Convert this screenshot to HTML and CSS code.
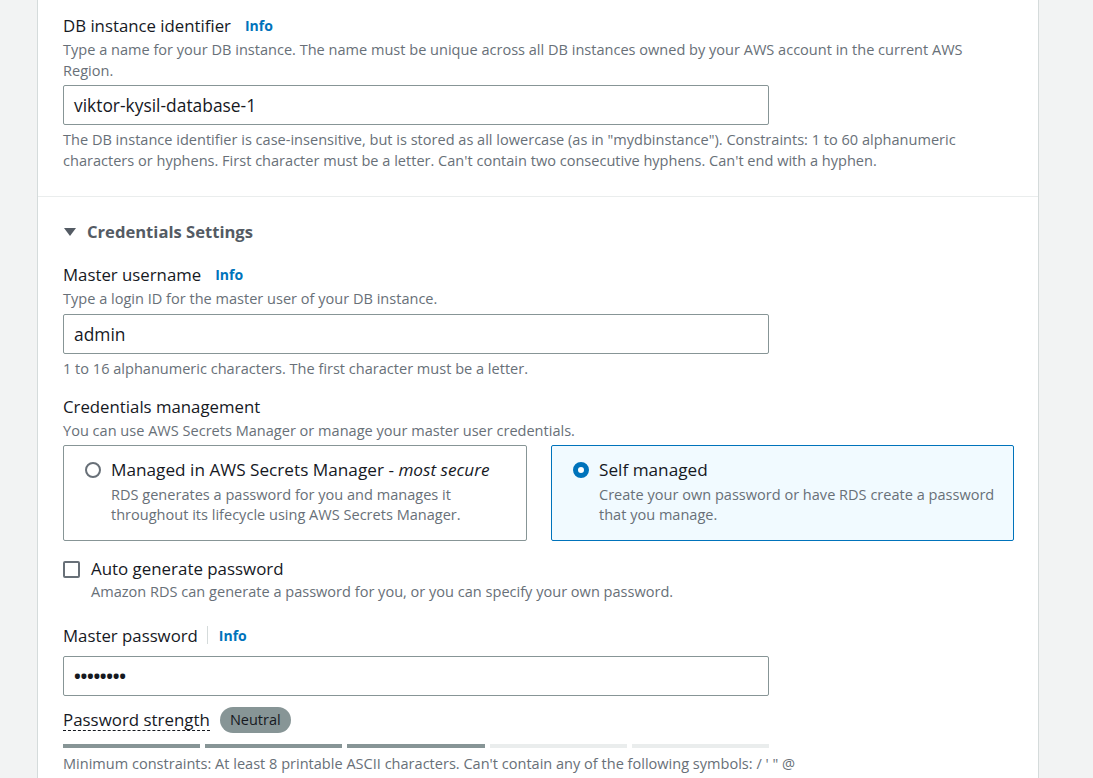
FILE: index.html
```html
<!DOCTYPE html>
<html lang="en">
<head>
<meta charset="utf-8">
<title>Settings</title>
<link rel="stylesheet" href="styles.css">
</head>
<body>
<div class="panel">
  <section class="section top">
    <div class="field">
      <div class="label-row"><span class="label">DB instance identifier</span><a class="info">Info</a></div>
      <div class="desc">Type a name for your DB instance. The name must be unique across all DB instances owned by your AWS account in the current AWS Region.</div>
      <div class="input">viktor-kysil-database-1</div>
      <div class="hint">The DB instance identifier is case-insensitive, but is stored as all lowercase (as in "mydbinstance"). Constraints: 1 to 60 alphanumeric characters or hyphens. First character must be a letter. Can't contain two consecutive hyphens. Can't end with a hyphen.</div>
    </div>
  </section>
  <section class="section creds">
    <div class="expander">
      <svg class="caret" width="14" height="10" viewBox="0 0 14 10"><path d="M1 1 L13 1 L7 9 Z" fill="#545b64"/></svg>
      <span>Credentials Settings</span>
    </div>
    <div class="field">
      <div class="label-row"><span class="label">Master username</span><a class="info">Info</a></div>
      <div class="desc">Type a login ID for the master user of your DB instance.</div>
      <div class="input">admin</div>
      <div class="hint">1 to 16 alphanumeric characters. The first character must be a letter.</div>
    </div>
    <div class="field cm">
      <div class="label-row"><span class="label">Credentials management</span></div>
      <div class="desc">You can use AWS Secrets Manager or manage your master user credentials.</div>
      <div class="tiles">
        <div class="tile">
          <span class="radio"></span>
          <div class="tile-body">
            <div class="tile-title">Managed in AWS Secrets Manager - <em>most secure</em></div>
            <div class="tile-desc">RDS generates a password for you and manages it throughout its lifecycle using AWS Secrets Manager.</div>
          </div>
        </div>
        <div class="tile selected">
          <span class="radio checked"></span>
          <div class="tile-body">
            <div class="tile-title">Self managed</div>
            <div class="tile-desc">Create your own password or have RDS create a password that you manage.</div>
          </div>
        </div>
      </div>
    </div>
    <div class="checkrow">
      <span class="checkbox"></span>
      <div>
        <div class="check-label">Auto generate password</div>
        <div class="desc">Amazon RDS can generate a password for you, or you can specify your own password.</div>
      </div>
    </div>
    <div class="field pw">
      <div class="label-row"><span class="label">Master password</span><span class="sep"></span><a class="info">Info</a></div>
      <div class="input dots">••••••••</div>
      <div class="strength-row"><span class="strength-label">Password strength</span><span class="badge">Neutral</span></div>
      <div class="bars"><span class="bar on"></span><span class="bar on"></span><span class="bar on"></span><span class="bar"></span><span class="bar"></span></div>
      <div class="hint">Minimum constraints: At least 8 printable ASCII characters. Can't contain any of the following symbols: / ' " @</div>
    </div>
  </section>
</div>
</body>
</html>
```
FILE: styles.css
```css
html, body {
  margin: 0;
  padding: 0;
  background: #f2f3f3;
  font-family: "Open Sans", "Noto Sans", Arial, sans-serif;
  color: #16191f;
}
.panel {
  margin-left: 37px;
  width: 1000px;
  min-height: 778px;
  background: #fff;
  border-left: 1px solid #d5dbdb;
  border-right: 1px solid #d5dbdb;
}
.section {
  padding: 0 25px;
}
.section.top {
  padding-top: 13px;
  padding-bottom: 26px;
  border-bottom: 1px solid #eaeded;
}
.label-row {
  display: flex;
  align-items: center;
  height: 24px;
}
.label {
  font-size: 16.8px;
  color: #16191f;
}
.info {
  color: #0073bb;
  font-weight: 700;
  font-size: 14px;
  margin-left: 14px;
}
.sep {
  width: 1px;
  height: 18px;
  background: #d5dbdb;
  margin-left: 9px;
}
.sep + .info { margin-left: 11px; }
.desc, .hint, .tile-desc {
  font-size: 14.55px;
  line-height: 20.5px;
  color: #687078;
  max-width: 930px;
}
.desc { margin-top: 2px; }
.input {
  box-sizing: border-box;
  width: 706px;
  height: 40px;
  border: 1px solid #879596;
  border-radius: 2px;
  margin-top: 5px;
  padding: 0 10px;
  display: flex;
  align-items: center;
  font-size: 17.4px;
  color: #16191f;
}
.hint { margin-top: 4px; }
.expander {
  display: flex;
  align-items: center;
  gap: 10px;
  margin-top: 23px;
  font-size: 16.6px;
  font-weight: 700;
  color: #545b64;
}
.creds .field { margin-top: 19px; }
.creds .field.cm { margin-top: 16px; }
.tiles {
  display: grid;
  grid-template-columns: 464px 463px;
  gap: 24px;
  margin-top: 4.4px;
}
.tile {
  box-sizing: border-box;
  height: 96px;
  border: 1px solid #879596;
  border-radius: 2px;
  display: flex;
  padding: 13px 14px 0 21px;
  gap: 10px;
}
.tile.selected {
  background: #f1faff;
  border-color: #0073bb;
}
.radio {
  box-sizing: border-box;
  width: 16px;
  height: 16px;
  border-radius: 50%;
  border: 2px solid #687078;
  margin-top: 3px;
  flex: none;
}
.radio.checked {
  border: 5px solid #0073bb;
  background: #fff;
}
.tile-title {
  font-size: 17.2px;
  line-height: 22px;
}
.tile-title em { font-weight: 400; }
.tile-desc { margin-top: 3px; }
.checkrow {
  display: flex;
  gap: 11px;
  margin-top: 17px;
}
.checkbox {
  box-sizing: border-box;
  width: 17px;
  height: 17px;
  border: 2px solid #687078;
  border-radius: 2px;
  margin-top: 3px;
  flex: none;
}
.check-label {
  font-size: 16.9px;
  line-height: 22px;
}
.checkrow .desc { margin-top: 1px; }
.creds .field.pw { margin-top: 22px; }
.pw .input { margin-top: 9px; }
.dots {
  font-size: 18px;
  letter-spacing: -0.3px;
  font-weight: 700;
}
.strength-row {
  display: flex;
  align-items: center;
  margin-top: 11px;
  gap: 10px;
}
.strength-label {
  font-size: 16.9px;
  border-bottom: 1px dashed #16191f;
  line-height: 20px;
}
.badge {
  background: #879596;
  color: #16191f;
  font-size: 14.5px;
  border-radius: 14px;
  padding: 2px 10px;
  line-height: 22px;
}
.bars {
  display: grid;
  grid-template-columns: repeat(5, 1fr);
  gap: 5px;
  width: 706px;
  margin-top: 11px;
}
.bar {
  height: 4px;
  background: #eaeded;
}
.bar.on { background: #879596; }
.pw .hint { margin-top: 5px; }
```
